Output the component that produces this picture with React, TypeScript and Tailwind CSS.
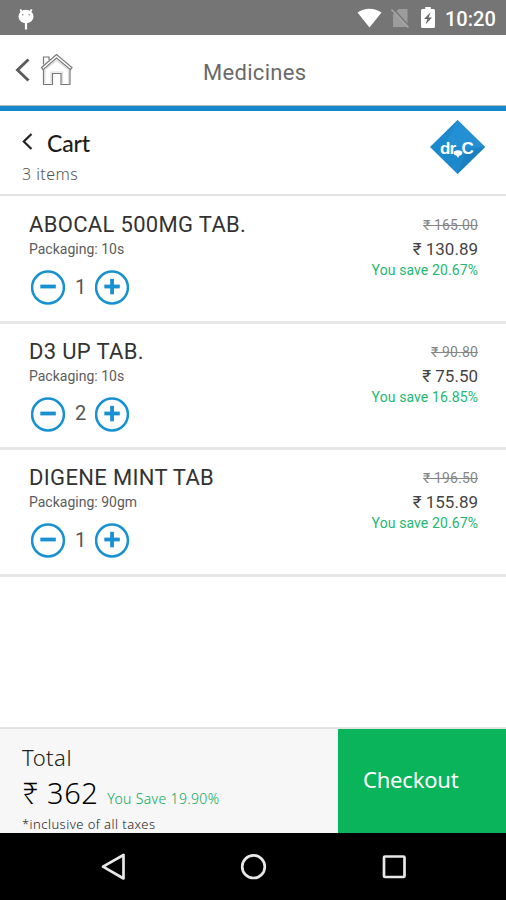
import React from "react";

interface CartItem {
  name: string;
  packaging: string;
  quantity: number;
  mrp: string;
  price: string;
  saved: string;
}

const items: CartItem[] = [
  {
    name: "ABOCAL 500MG TAB.",
    packaging: "10s",
    quantity: 1,
    mrp: "165.00",
    price: "130.89",
    saved: "20.67%",
  },
  {
    name: "D3 UP TAB.",
    packaging: "10s",
    quantity: 2,
    mrp: "90.80",
    price: "75.50",
    saved: "16.85%",
  },
  {
    name: "DIGENE MINT TAB",
    packaging: "90gm",
    quantity: 1,
    mrp: "196.50",
    price: "155.89",
    saved: "20.67%",
  },
];

const StatusBar = () => (
  <div className="flex h-[35px] shrink-0 items-center bg-[#757575] text-white">
    <svg className="ml-[16px] h-[26px] w-[20px]" viewBox="0 0 20 26" fill="none">
      <path d="M4.300 4.500 6.500 8M15.700 4.500 13.500 8" stroke="white" strokeWidth="2" />
      <ellipse cx="10" cy="11.500" rx="7.500" ry="6.800" fill="white" />
      <path d="M10 18v6.500" stroke="white" strokeWidth="2.200" />
      <circle cx="6.800" cy="9.800" r="0.700" fill="#757575" />
      <circle cx="13.200" cy="9.800" r="0.700" fill="#757575" />
    </svg>
    <div className="ml-auto flex items-center">
      <svg className="h-[20px] w-[25px]" viewBox="0 0 25 20">
        <path d="M.5 4.5C7.500-.6 17.500-.6 24.500 4.500L12.500 19.500Z" fill="white" />
      </svg>
      <svg className="ml-[9px] h-[20px] w-[18px]" viewBox="0 0 18 20">
        <path d="M7.500 1H16.500V19H2V6.500Z" fill="#9c9c9c" />
        <path d="M1.500 0 18 18" stroke="#757575" strokeWidth="1.500" />
        <path d="M.5 1.500 17.500 19.500" stroke="#a3a3a3" strokeWidth="1.700" />
      </svg>
      <svg className="ml-[12px] h-[21px] w-[14px]" viewBox="0 0 14 21">
        <path
          d="M4.200 0H9.800V2H12.500Q14 2 14 3.500V19.500Q14 21 12.500 21H1.500Q0 21 0 19.500V3.500Q0 2 1.500 2H4.200Z"
          fill="white"
        />
        <path d="M9.800 5 3 12H6.400L4.600 17.500 11 10.500H7.600Z" fill="#6a6a6a" />
      </svg>
      <span className="mr-[10px] ml-[10px] w-[51px] pt-[3px] text-[20px] leading-[24px] font-medium whitespace-nowrap">
        10:20
      </span>
    </div>
  </div>
);

const Header = () => (
  <div className="flex h-[71px] shrink-0 items-center border-b border-[#b9b9b9] bg-white">
    <svg className="ml-[15px] h-[26px] w-[16px]" viewBox="0 0 16 26" fill="none">
      <path d="M13.500 2.500 2.500 13 13.500 23.500" stroke="#5c5c5c" strokeWidth="2.900" />
    </svg>
    <svg
      className="ml-[9px] h-[34px] w-[34px]"
      viewBox="0 0 34 34"
      fill="none"
      stroke="#777"
      strokeWidth="1.200"
    >
      <path d="M1.500 14.500 16.500 1.500 32 14.500 30.500 16.700 16.500 5 3 16.700Z" />
      <path d="M3.500 11.500V4H9V7" />
      <path d="M3.500 16.500V31.500H12.500V20.500H21V31.500H30V16.500" />
      <path d="M5 30V16.500L16.500 7.500 28.500 16.500V30M11 30V19H22.500V30" strokeOpacity=".25" />
    </svg>
    <h1 className="ml-[129px] pt-[5px] text-[22px] leading-[28px] tracking-[0.300px] text-[#6a6a6a]">
      Medicines
    </h1>
  </div>
);

const Logo = () => (
  <svg className="mt-[9px] mr-[21px] h-[54px] w-[55px]" viewBox="0 0 55 54">
    <path d="M27.500 0 55 27 27.500 54 0 27Z" fill="#1d89cd" />
    <path d="M27.500 0 55 27H14Z" fill="#2490d3" />
    <path d="M27.500 54 55 27 36 31Z" fill="#1a80c2" />
    <text
      x="10"
      y="33.500"
      fill="white"
      fontFamily="Liberation Sans, sans-serif"
      fontSize="17"
      fontWeight="700"
      letterSpacing="-1"
    >
      dr
    </text>
    <ellipse cx="28" cy="33" rx="4.300" ry="2.800" fill="white" />
    <path d="M26 34.500 28 38 30 34.500Z" fill="white" />
    <text
      x="31.500"
      y="33.500"
      fill="white"
      fontFamily="Liberation Sans, sans-serif"
      fontSize="17"
      fontWeight="700"
    >
      C
    </text>
  </svg>
);

const CartTitle = () => (
  <div className="flex h-[90px] shrink-0 justify-between border-t-[5px] border-t-[#1488cb] border-b-[2px] border-b-[#e3e3e3] font-['Lato',sans-serif]">
    <div className="pl-[22px]">
      <div className="mt-[16px] flex h-[30px] items-center">
        <svg className="h-[18px] w-[11px]" viewBox="0 0 11 18" fill="none">
          <path d="M9.500 1 1.800 8.500 9.500 16" stroke="#222" strokeWidth="2.200" />
        </svg>
        <h2 className="ml-[14px] pt-[2px] text-[23px] leading-[28px] font-medium tracking-[-0.200px] text-[#1c1c1c]">
          Cart
        </h2>
      </div>
      <p className="mt-[5px] font-['Noto_Sans',sans-serif] text-[16px] leading-[24px] font-light tracking-[0.450px] text-[#555]">
        3 items
      </p>
    </div>
    <Logo />
  </div>
);

const QuantityButton: React.FC<{ type: "minus" | "plus" }> = ({ type }) => (
  <button className="h-[35px] w-[35px]">
    <svg viewBox="0 0 35 35" fill="none" stroke="#1791d1">
      <circle cx="17" cy="17.500" r="15.900" strokeWidth="2.500" />
      <path d="M9.300 16.500H24.800" strokeWidth="3.800" />
      {type === "plus" && <path d="M17.050 8.800V24.300" strokeWidth="3.800" />}
    </svg>
  </button>
);

const CartRow: React.FC<{ item: CartItem }> = ({ item }) => (
  <li className="flex h-[126.670px] justify-between border-b-[3px] border-[#e7e7e7] pr-[28px] pl-[29px]">
    <div className="pt-[14px]">
      <h3 className="text-[22px] leading-[28px] tracking-[0.330px] text-[#333]">{item.name}</h3>
      <p className="text-[14px] leading-[20px] text-[#5c5c5c]">Packaging: {item.packaging}</p>
      <div className="mt-[11px] ml-[2px] flex items-center">
        <QuantityButton type="minus" />
        <span className="w-[29px] pb-[2px] text-center text-[20px] leading-[32px] text-[#555]">
          {item.quantity}
        </span>
        <QuantityButton type="plus" />
      </div>
    </div>
    <div className="pt-[18px] text-right">
      <p className="text-[14px] leading-[20px] tracking-[0.150px] text-[#858585] line-through">
        ₹ {item.mrp}
      </p>
      <p className="mt-[2px] text-[17px] leading-[24px] text-[#444]">₹ {item.price}</p>
      <p className="text-[14px] leading-[18px] tracking-[0.100px] text-[#22b873]">
        You save {item.saved}
      </p>
    </div>
  </li>
);

const CheckoutBar = () => (
  <div className="flex h-[106px] shrink-0 border-t-[2px] border-[#e2e2e2] bg-[#f7f7f7] font-['Noto_Sans',sans-serif]">
    <div className="w-[338px] pt-[14px] pl-[22px]">
      <p className="text-[22px] leading-[28px] font-light tracking-[0.500px] text-[#222]">Total</p>
      <div className="mt-px flex items-baseline">
        <span className="text-[29px] leading-[42px] font-light tracking-[0.500px] text-black">
          ₹ 362
        </span>
        <span className="ml-[9px] text-[14px] font-light tracking-[0.350px] text-[#09a85a]">
          You Save 19.90%
        </span>
      </div>
      <p className="text-[13px] leading-[20px] font-light tracking-[0.450px] text-[#222]">
        *inclusive of all taxes
      </p>
    </div>
    <button className="flex flex-1 bg-[#09b45a] pt-[35px] pl-[25px] text-[22px] leading-[30px] tracking-[-0.200px] text-white">
      Checkout
    </button>
  </div>
);

const NavigationBar = () => (
  <div className="h-[67px] shrink-0 bg-black">
    <svg
      className="h-[67px] w-[506px]"
      viewBox="0 0 506 67"
      fill="none"
      stroke="#e8e8e8"
      strokeWidth="2.700"
    >
      <path d="M123.500 22V45.500L103 33.700Z" strokeLinejoin="round" />
      <circle cx="253.500" cy="33.700" r="11.300" />
      <rect x="384" y="23.500" width="20.500" height="20.500" rx="1" />
    </svg>
  </div>
);

const App = () => {
  return (
    <div className="flex h-[900px] w-[506px] flex-col overflow-hidden bg-white font-['Roboto','Noto_Sans',sans-serif]">
      <StatusBar />
      <Header />
      <CartTitle />
      <ul className="flex-1 pt-[1px]">
        {items.map((item) => (
          <CartRow key={item.name} item={item} />
        ))}
      </ul>
      <CheckoutBar />
      <NavigationBar />
    </div>
  );
};

export default App;
